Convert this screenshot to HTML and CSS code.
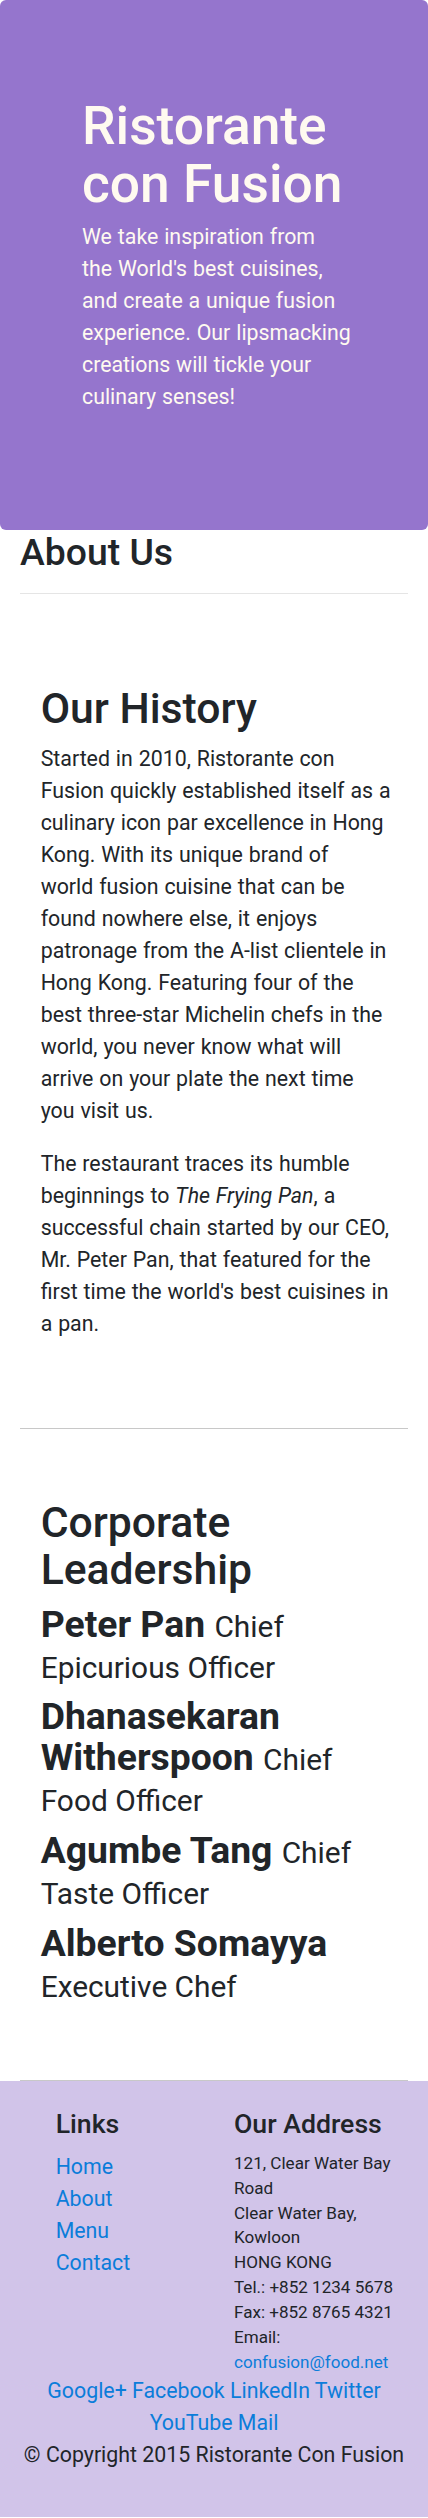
FILE: index.html
```html
<!DOCTYPE html>
<html lang="en">
<head>
<meta charset="utf-8">
<title>Ristorante con Fusion - About Us</title>
<link rel="stylesheet" href="styles.css">
</head>
<body>
<header class="jumbotron">
  <h1 class="jumbo-title">Ristorante con Fusion</h1>
  <p class="jumbo-text">We take inspiration from<br>the World's best cuisines,<br>and create a unique fusion<br>experience. Our lipsmacking<br>creations will tickle your<br>culinary senses!</p>
</header>

<main class="container">
  <h3 class="page-title">About Us</h3>
  <hr class="page-rule">

  <section class="row-content history">
    <h2 class="section-title">Our History</h2>
    <p class="text">Started in 2010, Ristorante con<br>Fusion quickly established itself as a<br>culinary icon par excellence in Hong<br>Kong. With its unique brand of<br>world fusion cuisine that can be<br>found nowhere else, it enjoys<br>patronage from the A-list clientele in<br>Hong Kong. Featuring four of the<br>best three-star Michelin chefs in the<br>world, you never know what will<br>arrive on your plate the next time<br>you visit us.</p>
    <p class="text">The restaurant traces its humble<br>beginnings to <em>The Frying Pan</em>, a<br>successful chain started by our CEO,<br>Mr. Peter Pan, that featured for the<br>first time the world's best cuisines in<br>a pan.</p>
  </section>

  <section class="row-content leaders">
    <h2 class="section-title">Corporate Leadership</h2>
    <ul class="leader-list">
      <li><h3 class="leader">Peter Pan <small class="role">Chief Epicurious Officer</small></h3></li>
      <li><h3 class="leader">Dhanasekaran Witherspoon <small class="role">Chief Food Officer</small></h3></li>
      <li><h3 class="leader">Agumbe Tang <small class="role">Chief Taste Officer</small></h3></li>
      <li><h3 class="leader">Alberto Somayya <small class="role">Executive Chef</small></h3></li>
    </ul>
  </section>
</main>

<footer class="footer">
  <div class="footer-row">
    <div class="col-links">
      <h5 class="footer-title">Links</h5>
      <ul class="link-list">
        <li><a href="#">Home</a></li>
        <li><a href="#">About</a></li>
        <li><a href="#">Menu</a></li>
        <li><a href="#">Contact</a></li>
      </ul>
    </div>
    <div class="col-address">
      <h5 class="footer-title">Our Address</h5>
      <address class="address">
        121, Clear Water Bay Road<br>
        Clear Water Bay, Kowloon<br>
        HONG KONG<br>
        Tel.: +852 1234 5678<br>
        Fax: +852 8765 4321<br>
        Email: <a href="mailto:confusion@food.net">confusion@food.net</a>
      </address>
    </div>
    <div class="col-social">
      <a href="#">Google+</a> <a href="#">Facebook</a> <a href="#">LinkedIn</a> <a href="#">Twitter</a> <a href="#">YouTube</a> <a href="#">Mail</a>
    </div>
  </div>
  <p class="copyright">© Copyright 2015 Ristorante Con Fusion</p>
</footer>
</body>
</html>
```

FILE: styles.css
```css
* {
  box-sizing: border-box;
}

body {
  margin: 0;
  font-family: Roboto, "Noto Sans", "Liberation Sans", sans-serif;
  font-size: 21.33px;
  line-height: 32px;
  color: #212529;
  background: #ffffff;
}

a {
  color: #0b7dda;
  text-decoration: none;
}

/* ---------- Jumbotron ---------- */
.jumbotron {
  background: #9575cd;
  color: #fffaf0;
  border-radius: 6px;
  padding: 97px 50px 95.7px 82px;
}

.jumbo-title {
  margin: 0 0 8px;
  font-size: 53.33px;
  line-height: 58px;
  font-weight: 500;
}

.jumbo-text {
  margin: 0 0 21.33px;
  word-spacing: 0.6px;
}

/* ---------- Main ---------- */
.container {
  padding: 0 20px;
}

.page-title {
  margin: 0;
  font-size: 37.33px;
  line-height: 44.8px;
  font-weight: 500;
}

.page-rule {
  margin: 18.2px 0 21.33px;
  border: 0;
  border-top: 1.33px solid rgba(0, 0, 0, 0.1);
  height: 0;
}

.row-content {
  padding: 70px 8px 66.67px 20.67px;
  border-bottom: 1.33px solid #c8c8c8;
}

.row-content.leaders {
  padding-bottom: 65px;
}

.section-title {
  margin: 0 0 10.67px;
  font-size: 42.67px;
  line-height: 46.93px;
  font-weight: 500;
}

.text {
  margin: 0 0 21.33px;
  word-spacing: 0.6px;
}

.leader-list {
  list-style: none;
  margin: 0;
  padding: 0;
}

.leader {
  margin: 0 0 10.67px;
  font-size: 37.33px;
  line-height: 41px;
  font-weight: 700;
}

.role {
  font-size: 80%;
  font-weight: 400;
  line-height: 1;
}

/* ---------- Footer ---------- */
.footer {
  background: #d1c4e9;
  padding: 26.67px 0 25px;
}

.footer-row {
  display: flex;
  flex-wrap: wrap;
}

.col-links {
  margin-left: 8.3333%;
  width: 41.6667%;
  padding: 0 20px;
}

.col-address {
  width: 50%;
  padding: 0 20px;
}

.col-social {
  width: 100%;
  padding: 0 40px;
  text-align: center;
}

.footer-title {
  margin: 0 0 10.67px;
  font-size: 26.67px;
  line-height: 32px;
  font-weight: 500;
}

.link-list {
  list-style: none;
  margin: 0 0 21.33px;
  padding: 0;
}

.address {
  margin: 0;
  font-style: normal;
  font-size: 17.07px;
  line-height: 24.9px;
}

.copyright {
  margin: 0 0 21.33px;
  text-align: center;
  white-space: nowrap;
}
```
